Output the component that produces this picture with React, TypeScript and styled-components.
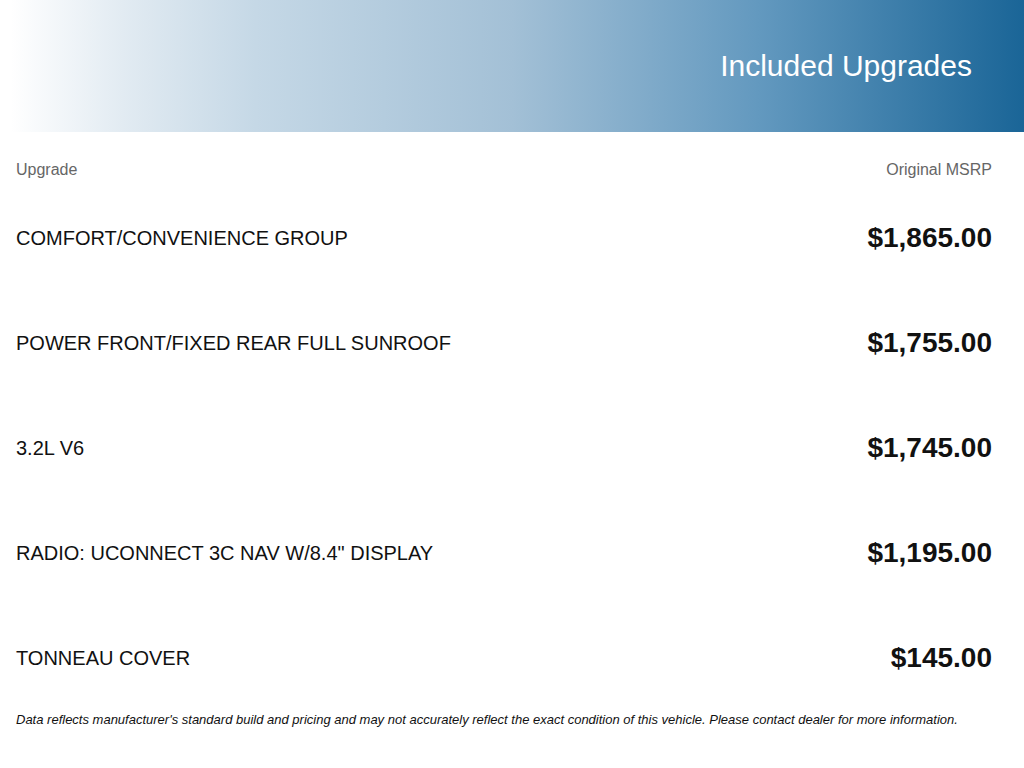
import styled, { createGlobalStyle } from "styled-components";

const GlobalStyle = createGlobalStyle`
  body {
    margin: 0;
    background: #ffffff;
    font-family: "Liberation Sans", Arial, sans-serif;
  }
`;

const Page = styled.div`
  width: 100%;
  min-height: 768px;
  background: #ffffff;
`;

const Banner = styled.header`
  height: 132px;
  display: flex;
  align-items: center;
  justify-content: flex-end;
  padding-right: 52px;
  background: linear-gradient(
    to right,
    #ffffff 1%,
    #e2ebf2 12%,
    #c5d8e6 25%,
    #a3c0d6 50%,
    #6399bf 74%,
    #1a6597 100%
  );
`;

const Title = styled.h1`
  margin: 0;
  font-size: 30px;
  font-weight: normal;
  color: #ffffff;
`;

const Table = styled.section`
  padding: 29px 32px 0 16px;
`;

const HeadRow = styled.div`
  display: flex;
  justify-content: space-between;
  height: 18px;
  line-height: 18px;
  font-size: 16px;
  color: #666666;
  margin-bottom: 7px;
`;

const Row = styled.div`
  display: flex;
  align-items: center;
  justify-content: space-between;
  height: 105px;
`;

const Name = styled.span`
  font-size: 20px;
  color: #111111;
`;

const Price = styled.span`
  font-size: 28px;
  font-weight: bold;
  color: #111111;
  margin-bottom: 2px;
`;

const Note = styled.p`
  margin: 1px 0 0 16px;
  font-size: 13px;
  line-height: 16px;
  font-style: italic;
  color: #111111;
`;

interface Upgrade {
  name: string;
  price: string;
}

const upgrades: Upgrade[] = [
  { name: "COMFORT/CONVENIENCE GROUP", price: "$1,865.00" },
  { name: "POWER FRONT/FIXED REAR FULL SUNROOF", price: "$1,755.00" },
  { name: "3.2L V6", price: "$1,745.00" },
  { name: 'RADIO: UCONNECT 3C NAV W/8.4" DISPLAY', price: "$1,195.00" },
  { name: "TONNEAU COVER", price: "$145.00" },
];

function App() {
  return (
    <Page>
      <GlobalStyle />
      <Banner>
        <Title>Included Upgrades</Title>
      </Banner>
      <Table>
        <HeadRow>
          <span>Upgrade</span>
          <span>Original MSRP</span>
        </HeadRow>
        {upgrades.map((u) => (
          <Row key={u.name}>
            <Name>{u.name}</Name>
            <Price>{u.price}</Price>
          </Row>
        ))}
      </Table>
      <Note>
        Data reflects manufacturer's standard build and pricing and may not
        accurately reflect the exact condition of this vehicle. Please contact
        dealer for more information.
      </Note>
    </Page>
  );
}

export default App;
